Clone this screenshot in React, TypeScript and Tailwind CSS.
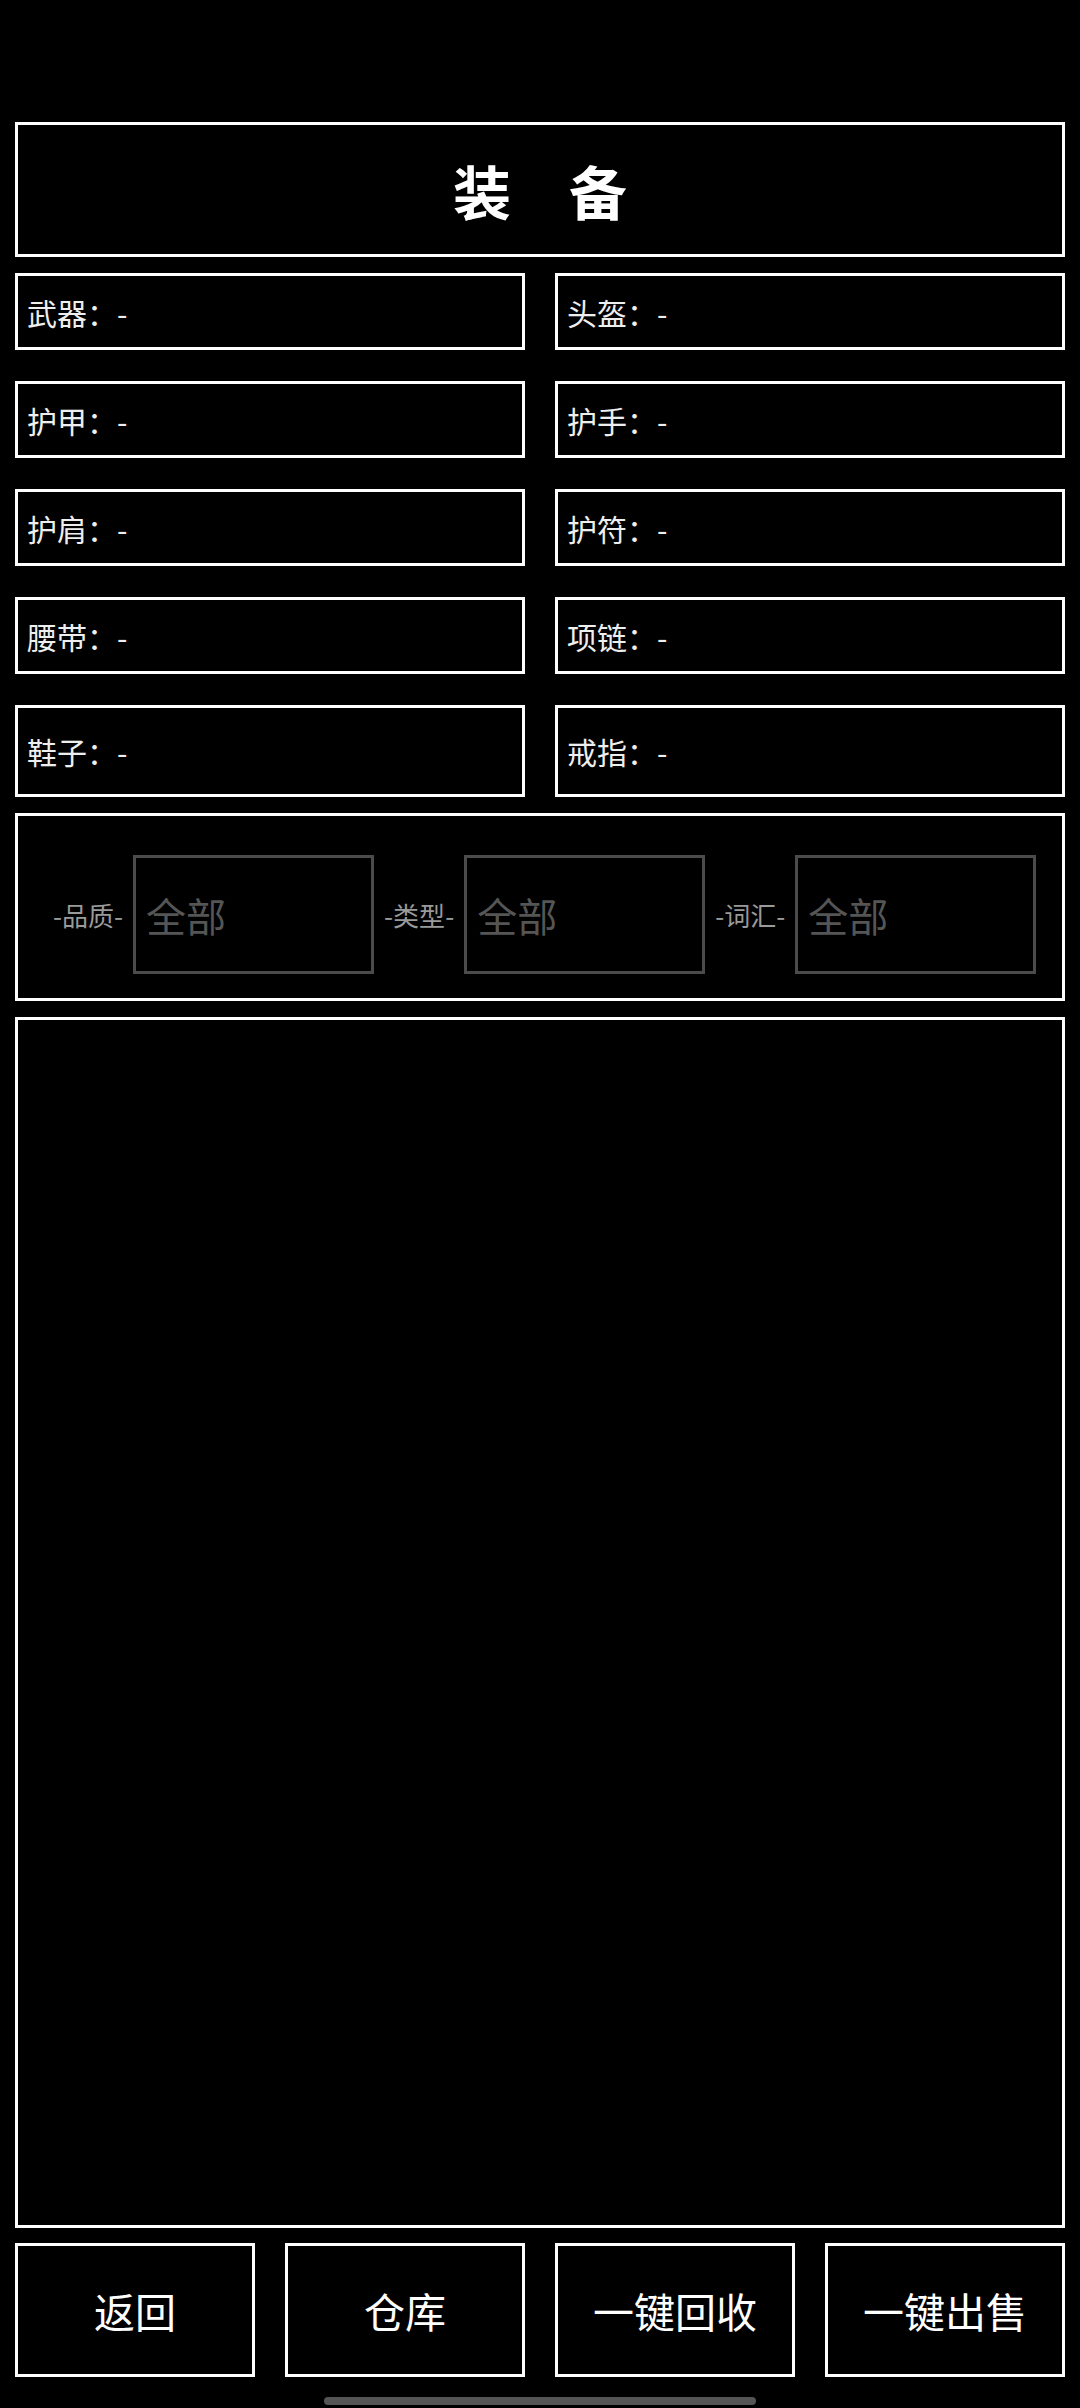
import React from "react";

const slots: string[][] = [
  ["武器", "头盔"],
  ["护甲", "护手"],
  ["护肩", "护符"],
  ["腰带", "项链"],
  ["鞋子", "戒指"],
];

const filters = ["品质", "类型", "词汇"];
const buttons = ["返回", "仓库", "一键回收", "一键出售"];

export default function App() {
  return (
    <div
      className="w-[1080px] h-[2408px] bg-black flex flex-col px-[15px] pt-[122px] overflow-hidden"
      style={{ fontFamily: '"Noto Sans CJK SC", "Noto Sans", sans-serif' }}
    >
      <div className="h-[135px] border-[3px] border-white flex items-center justify-center">
        <span className="text-[58px] font-bold text-white leading-none">装　备</span>
      </div>

      <div className="mt-[16px] flex flex-col gap-y-[31px]">
        {slots.map((row, i) => (
          <div key={i} className="grid grid-cols-2 gap-x-[30px]">
            {row.map((name) => (
              <div
                key={name}
                className={`${i === 4 ? "h-[92px]" : "h-[77px]"} border-[3px] border-white flex items-center pl-[9px]`}
              >
                <span className="text-[30px] text-[#eeeeee] leading-none">{name}：-</span>
              </div>
            ))}
          </div>
        ))}
      </div>

      <div className="mt-[16px] h-[188px] border-[3px] border-white flex items-start pt-[39px] pl-[35px]">
        <div className="flex items-center">
          {filters.map((f, i) => (
            <div key={f} className={`flex items-center ${i > 0 ? "ml-[10px]" : ""}`}>
              <span className="text-[26px] text-[#9a9a9a] leading-none">-{f}-</span>
              <div className="ml-[10px] w-[241px] h-[119px] border-[3px] border-[#4b4b4b] flex items-center pl-[10px]">
                <span className="text-[40px] text-[#555555] leading-none">全部</span>
              </div>
            </div>
          ))}
        </div>
      </div>

      <div className="mt-[16px] h-[1211px] border-[3px] border-white" />

      <div className="mt-[15px] grid grid-cols-4 gap-x-[30px]">
        {buttons.map((b) => (
          <div key={b} className="h-[134px] border-[3px] border-white flex items-center justify-center">
            <span className="text-[41px] text-white leading-none">{b}</span>
          </div>
        ))}
      </div>

      <div className="mt-[20px] flex justify-center">
        <div className="w-[432px] h-[8px] rounded-full bg-[#555555]" />
      </div>
    </div>
  );
}
